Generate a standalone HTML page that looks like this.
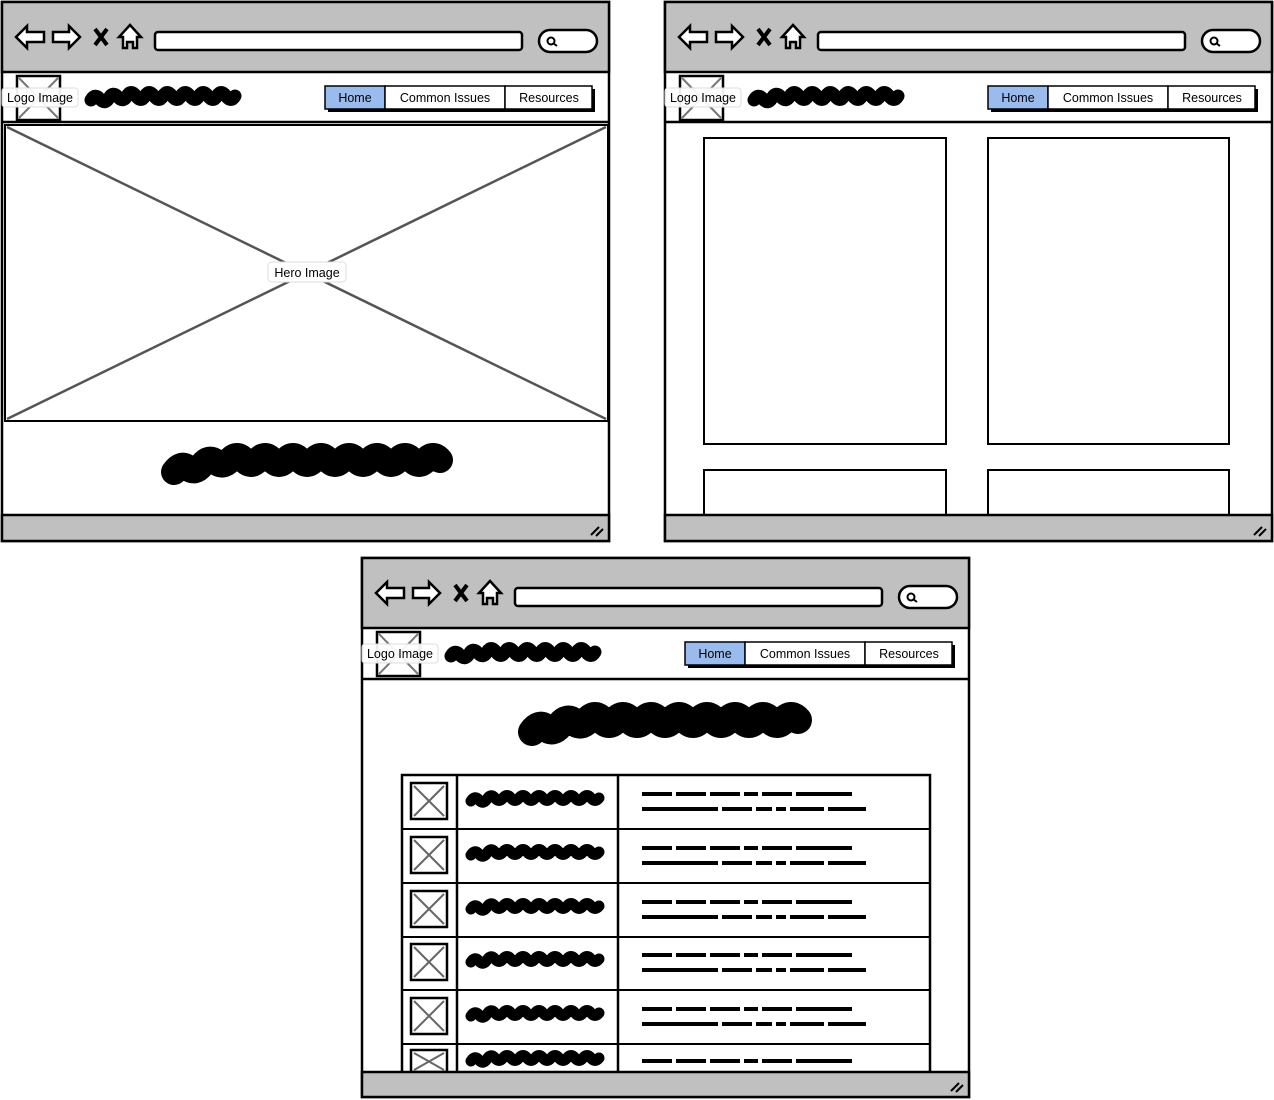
<!DOCTYPE html>
<html><head><meta charset="utf-8"><style>
html,body{margin:0;padding:0;background:#fff;width:1274px;height:1100px;overflow:hidden}
svg text{font-family:"Liberation Sans","DejaVu Sans",sans-serif;font-size:12.5px;fill:#000}
</style></head><body>
<svg width="1274" height="1100" viewBox="0 0 1274 1100" xmlns="http://www.w3.org/2000/svg">
<defs>
<style>
.sq{fill:none;stroke:#000;stroke-linecap:round;stroke-linejoin:round}
.ln{stroke:#000;stroke-width:2.5;fill:none}
</style>
</defs>

<!-- FRAME A -->
<g transform="translate(2,2)">
<rect x="0" y="0" width="607" height="539" fill="#fff" stroke="#000" stroke-width="2.5"/>
<rect x="0" y="0" width="607" height="70" fill="#c0c0c0" stroke="#000" stroke-width="2.5"/>
<polygon points="14,35 25,24 25,30 42,30 42,40 25,40 25,46" fill="#fff" stroke="#000" stroke-width="2.5"/>
<polygon points="78,35 67,24 67,30 51,30 51,40 67,40 67,46" fill="#fff" stroke="#000" stroke-width="2.5"/>
<path d="M93,27 L105,43 M105,27 L93,43" stroke="#000" stroke-width="4"/>
<polygon points="128,23 139,35 135,35 135,46 131,46 131,40 125,40 125,46 121,46 121,35 117,35" fill="#fff" stroke="#000" stroke-width="2.5"/>
<rect x="153" y="30" width="367" height="18" rx="3" fill="#fff" stroke="#000" stroke-width="2.5"/>
<rect x="537" y="28" width="58" height="22" rx="11" fill="#fff" stroke="#000" stroke-width="2.5"/>
<circle cx="549" cy="39" r="3.5" fill="none" stroke="#000" stroke-width="2"/><path d="M551,41 L555,44" stroke="#000" stroke-width="2"/>
<line x1="0" y1="120" x2="607" y2="120" class="ln"/>
<rect x="15" y="74" width="43" height="44" fill="none" stroke="#000" stroke-width="2.5"/>
<path d="M17,76 L56,116 M56,76 L17,116" stroke="#777" stroke-width="2"/>
<rect x="0" y="86" width="76" height="19" rx="3" fill="#fff" fill-opacity=".92" stroke="#ddd"/>
<text x="38" y="100" text-anchor="middle">Logo Image</text>
<path class="sq" stroke-width="13" d="M89,98 q4,-7 9,-1 t9,-1 t9,-1 t9,-1 t9,0 t9,0 t9,0 t9,0 t9,0 t9,0 t9,0 t9,0 t9,0 t9,0 t9,0 t9,0"/>
<rect x="326" y="87" width="267" height="23" fill="#000"/>
<rect x="323" y="84" width="60" height="23" fill="#99bbee" stroke="#000" stroke-width="1.5"/>
<rect x="383" y="84" width="120" height="23" fill="#fff" stroke="#000" stroke-width="1.5"/>
<rect x="503" y="84" width="87" height="23" fill="#fff" stroke="#000" stroke-width="1.5"/>
<text x="353" y="100" text-anchor="middle">Home</text>
<text x="443" y="100" text-anchor="middle">Common Issues</text>
<text x="547" y="100" text-anchor="middle">Resources</text>
<rect x="3" y="123" width="603" height="296" fill="#fff" stroke="#000" stroke-width="2"/>
<path d="M5,125 L604,417 M604,125 L5,417" stroke="#555" stroke-width="2.5"/>
<rect x="266" y="260" width="78" height="20" rx="4" fill="#fff" stroke="#ddd"/>
<text x="305" y="275" text-anchor="middle">Hero Image</text>
<path class="sq" stroke-width="26" d="M172,470 q7,-10 14,-4 t14,-3 t14,-3 t14,-2 t14,0 t14,0 t14,0 t14,0 t14,0 t14,0 t14,0 t14,0 t14,0 t14,0 t14,0 t14,0 t14,0 t14,0 t14,0"/>
<rect x="0" y="513" width="607" height="26" fill="#c0c0c0" stroke="#000" stroke-width="2.5"/>
<path d="M589,533 L597,525 M594,534 L601,527" stroke="#000" stroke-width="2"/>
</g>

<!-- FRAME B -->
<g transform="translate(665,2)">
<rect x="0" y="0" width="607" height="539" fill="#fff" stroke="#000" stroke-width="2.5"/>
<rect x="0" y="0" width="607" height="70" fill="#c0c0c0" stroke="#000" stroke-width="2.5"/>
<polygon points="14,35 25,24 25,30 42,30 42,40 25,40 25,46" fill="#fff" stroke="#000" stroke-width="2.5"/>
<polygon points="78,35 67,24 67,30 51,30 51,40 67,40 67,46" fill="#fff" stroke="#000" stroke-width="2.5"/>
<path d="M93,27 L105,43 M105,27 L93,43" stroke="#000" stroke-width="4"/>
<polygon points="128,23 139,35 135,35 135,46 131,46 131,40 125,40 125,46 121,46 121,35 117,35" fill="#fff" stroke="#000" stroke-width="2.5"/>
<rect x="153" y="30" width="367" height="18" rx="3" fill="#fff" stroke="#000" stroke-width="2.5"/>
<rect x="537" y="28" width="58" height="22" rx="11" fill="#fff" stroke="#000" stroke-width="2.5"/>
<circle cx="549" cy="39" r="3.5" fill="none" stroke="#000" stroke-width="2"/><path d="M551,41 L555,44" stroke="#000" stroke-width="2"/>
<line x1="0" y1="120" x2="607" y2="120" class="ln"/>
<rect x="15" y="74" width="43" height="44" fill="none" stroke="#000" stroke-width="2.5"/>
<path d="M17,76 L56,116 M56,76 L17,116" stroke="#777" stroke-width="2"/>
<rect x="0" y="86" width="76" height="19" rx="3" fill="#fff" fill-opacity=".92" stroke="#ddd"/>
<text x="38" y="100" text-anchor="middle">Logo Image</text>
<path class="sq" stroke-width="13" d="M89,98 q4,-7 9,-1 t9,-1 t9,-1 t9,-1 t9,0 t9,0 t9,0 t9,0 t9,0 t9,0 t9,0 t9,0 t9,0 t9,0 t9,0 t9,0"/>
<rect x="326" y="87" width="267" height="23" fill="#000"/>
<rect x="323" y="84" width="60" height="23" fill="#99bbee" stroke="#000" stroke-width="1.5"/>
<rect x="383" y="84" width="120" height="23" fill="#fff" stroke="#000" stroke-width="1.5"/>
<rect x="503" y="84" width="87" height="23" fill="#fff" stroke="#000" stroke-width="1.5"/>
<text x="353" y="100" text-anchor="middle">Home</text>
<text x="443" y="100" text-anchor="middle">Common Issues</text>
<text x="547" y="100" text-anchor="middle">Resources</text>
<rect x="39" y="136" width="242" height="306" fill="#fff" stroke="#000" stroke-width="2"/>
<rect x="323" y="136" width="241" height="306" fill="#fff" stroke="#000" stroke-width="2"/>
<rect x="39" y="468" width="242" height="47" fill="#fff" stroke="#000" stroke-width="2"/>
<rect x="323" y="468" width="241" height="47" fill="#fff" stroke="#000" stroke-width="2"/>
<rect x="0" y="513" width="607" height="26" fill="#c0c0c0" stroke="#000" stroke-width="2.5"/>
<path d="M589,533 L597,525 M594,534 L601,527" stroke="#000" stroke-width="2"/>
</g>

<!-- FRAME C -->
<g transform="translate(362,558)">
<rect x="0" y="0" width="607" height="539" fill="#fff" stroke="#000" stroke-width="2.5"/>
<rect x="0" y="0" width="607" height="70" fill="#c0c0c0" stroke="#000" stroke-width="2.5"/>
<polygon points="14,35 25,24 25,30 42,30 42,40 25,40 25,46" fill="#fff" stroke="#000" stroke-width="2.5"/>
<polygon points="78,35 67,24 67,30 51,30 51,40 67,40 67,46" fill="#fff" stroke="#000" stroke-width="2.5"/>
<path d="M93,27 L105,43 M105,27 L93,43" stroke="#000" stroke-width="4"/>
<polygon points="128,23 139,35 135,35 135,46 131,46 131,40 125,40 125,46 121,46 121,35 117,35" fill="#fff" stroke="#000" stroke-width="2.5"/>
<rect x="153" y="30" width="367" height="18" rx="3" fill="#fff" stroke="#000" stroke-width="2.5"/>
<rect x="537" y="28" width="58" height="22" rx="11" fill="#fff" stroke="#000" stroke-width="2.5"/>
<circle cx="549" cy="39" r="3.5" fill="none" stroke="#000" stroke-width="2"/><path d="M551,41 L555,44" stroke="#000" stroke-width="2"/>
<line x1="0" y1="121" x2="607" y2="121" class="ln"/>
<rect x="15" y="74" width="43" height="44" fill="none" stroke="#000" stroke-width="2.5"/>
<path d="M17,76 L56,116 M56,76 L17,116" stroke="#777" stroke-width="2"/>
<rect x="0" y="86" width="76" height="19" rx="3" fill="#fff" fill-opacity=".92" stroke="#ddd"/>
<text x="38" y="100" text-anchor="middle">Logo Image</text>
<path class="sq" stroke-width="13" d="M89,98 q4,-7 9,-1 t9,-1 t9,-1 t9,-1 t9,0 t9,0 t9,0 t9,0 t9,0 t9,0 t9,0 t9,0 t9,0 t9,0 t9,0 t9,0"/>
<rect x="326" y="87" width="267" height="23" fill="#000"/>
<rect x="323" y="84" width="60" height="23" fill="#99bbee" stroke="#000" stroke-width="1.5"/>
<rect x="383" y="84" width="120" height="23" fill="#fff" stroke="#000" stroke-width="1.5"/>
<rect x="503" y="84" width="87" height="23" fill="#fff" stroke="#000" stroke-width="1.5"/>
<text x="353" y="100" text-anchor="middle">Home</text>
<text x="443" y="100" text-anchor="middle">Common Issues</text>
<text x="547" y="100" text-anchor="middle">Resources</text>
<path class="sq" stroke-width="28" d="M170,174 q7,-10 14,-4 t14,-3 t14,-3 t14,-2 t14,0 t14,0 t14,0 t14,0 t14,0 t14,0 t14,0 t14,0 t14,0 t14,0 t14,0 t14,0 t14,0 t14,0 t14,0"/>
<rect x="40" y="217" width="528" height="300" fill="#fff" stroke="#000" stroke-width="2.5"/>
<line x1="95" y1="217" x2="95" y2="514" class="ln"/>
<line x1="256" y1="217" x2="256" y2="514" class="ln"/>
<g stroke="#000" stroke-width="2">
<line x1="40" y1="271" x2="568" y2="271"/><line x1="40" y1="325" x2="568" y2="325"/>
<line x1="40" y1="379" x2="568" y2="379"/><line x1="40" y1="432" x2="568" y2="432"/>
<line x1="40" y1="486" x2="568" y2="486"/>
</g>
<g>
<rect x="49" y="225" width="36" height="36" fill="none" stroke="#000" stroke-width="2.5"/><path d="M52,228 L82,258 M82,228 L52,258" stroke="#666" stroke-width="2"/>
<path class="sq" stroke-width="11" d="M109,243 q4,-6 8,-1 t8,-1 t8,-1 t8,0 t8,0 t8,0 t8,0 t8,0 t8,0 t8,0 t8,0 t8,0 t8,0 t8,0 t8,0 t8,0"/>
<path stroke="#000" stroke-width="4" stroke-dasharray="30,4,30,4,30,4,14,4,30,4,56,200" d="M280,236 L526,236"/>
<path stroke="#000" stroke-width="4" stroke-dasharray="76,4,30,4,16,4,10,4,34,4,38,200" d="M280,251 L530,251"/>
</g>
<g transform="translate(0,54)">
<rect x="49" y="225" width="36" height="36" fill="none" stroke="#000" stroke-width="2.5"/><path d="M52,228 L82,258 M82,228 L52,258" stroke="#666" stroke-width="2"/>
<path class="sq" stroke-width="11" d="M109,243 q4,-6 8,-1 t8,-1 t8,-1 t8,0 t8,0 t8,0 t8,0 t8,0 t8,0 t8,0 t8,0 t8,0 t8,0 t8,0 t8,0 t8,0"/>
<path stroke="#000" stroke-width="4" stroke-dasharray="30,4,30,4,30,4,14,4,30,4,56,200" d="M280,236 L526,236"/>
<path stroke="#000" stroke-width="4" stroke-dasharray="76,4,30,4,16,4,10,4,34,4,38,200" d="M280,251 L530,251"/>
</g>
<g transform="translate(0,108)">
<rect x="49" y="225" width="36" height="36" fill="none" stroke="#000" stroke-width="2.5"/><path d="M52,228 L82,258 M82,228 L52,258" stroke="#666" stroke-width="2"/>
<path class="sq" stroke-width="11" d="M109,243 q4,-6 8,-1 t8,-1 t8,-1 t8,0 t8,0 t8,0 t8,0 t8,0 t8,0 t8,0 t8,0 t8,0 t8,0 t8,0 t8,0 t8,0"/>
<path stroke="#000" stroke-width="4" stroke-dasharray="30,4,30,4,30,4,14,4,30,4,56,200" d="M280,236 L526,236"/>
<path stroke="#000" stroke-width="4" stroke-dasharray="76,4,30,4,16,4,10,4,34,4,38,200" d="M280,251 L530,251"/>
</g>
<g transform="translate(0,161)">
<rect x="49" y="225" width="36" height="36" fill="none" stroke="#000" stroke-width="2.5"/><path d="M52,228 L82,258 M82,228 L52,258" stroke="#666" stroke-width="2"/>
<path class="sq" stroke-width="11" d="M109,243 q4,-6 8,-1 t8,-1 t8,-1 t8,0 t8,0 t8,0 t8,0 t8,0 t8,0 t8,0 t8,0 t8,0 t8,0 t8,0 t8,0 t8,0"/>
<path stroke="#000" stroke-width="4" stroke-dasharray="30,4,30,4,30,4,14,4,30,4,56,200" d="M280,236 L526,236"/>
<path stroke="#000" stroke-width="4" stroke-dasharray="76,4,30,4,16,4,10,4,34,4,38,200" d="M280,251 L530,251"/>
</g>
<g transform="translate(0,215)">
<rect x="49" y="225" width="36" height="36" fill="none" stroke="#000" stroke-width="2.5"/><path d="M52,228 L82,258 M82,228 L52,258" stroke="#666" stroke-width="2"/>
<path class="sq" stroke-width="11" d="M109,243 q4,-6 8,-1 t8,-1 t8,-1 t8,0 t8,0 t8,0 t8,0 t8,0 t8,0 t8,0 t8,0 t8,0 t8,0 t8,0 t8,0 t8,0"/>
<path stroke="#000" stroke-width="4" stroke-dasharray="30,4,30,4,30,4,14,4,30,4,56,200" d="M280,236 L526,236"/>
<path stroke="#000" stroke-width="4" stroke-dasharray="76,4,30,4,16,4,10,4,34,4,38,200" d="M280,251 L530,251"/>
</g>
<g>
<rect x="49" y="492" width="36" height="22" fill="none" stroke="#000" stroke-width="2.5"/><path d="M52,495 L82,512 M82,495 L52,512" stroke="#666" stroke-width="2"/>
<path class="sq" stroke-width="11" d="M109,503 q4,-6 8,-1 t8,-1 t8,-1 t8,0 t8,0 t8,0 t8,0 t8,0 t8,0 t8,0 t8,0 t8,0 t8,0 t8,0 t8,0 t8,0"/>
<path stroke="#000" stroke-width="4" stroke-dasharray="30,4,30,4,30,4,14,4,30,4,56,200" d="M280,503 L526,503"/>
</g>
<rect x="0" y="514" width="607" height="25" fill="#c0c0c0" stroke="#000" stroke-width="2.5"/>
<path d="M589,533 L597,525 M594,534 L601,527" stroke="#000" stroke-width="2"/>
</g>
</svg>
</body></html>
